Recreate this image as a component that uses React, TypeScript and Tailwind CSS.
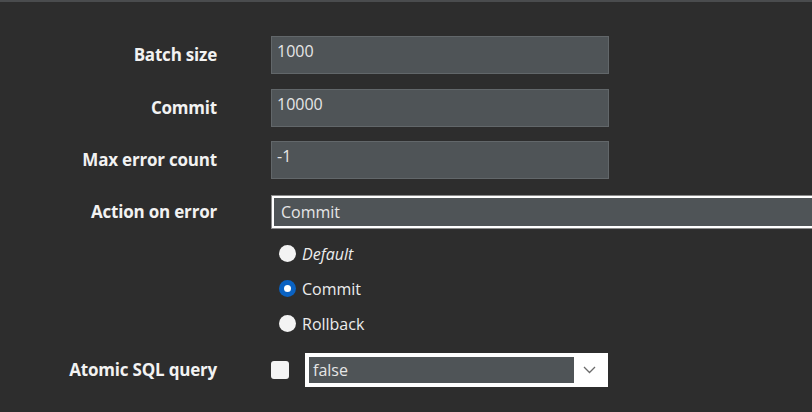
import React, { useState } from 'react';

const font = { fontFamily: '"Open Sans", "Noto Sans", sans-serif' };

const Label: React.FC<{ text: string }> = ({ text }) => (
  <div className="w-[217px] shrink-0 text-right text-[17px] font-bold tracking-[-0.2px] text-[#f2f2f2]">{text}</div>
);

const App: React.FC = () => {
  const [action, setAction] = useState('Commit');
  const [atomic, setAtomic] = useState(false);

  const radios = [
    { label: 'Default', italic: true },
    { label: 'Commit', italic: false },
    { label: 'Rollback', italic: false },
  ];

  return (
    <div className="w-[812px] h-[412px] overflow-hidden bg-[#2d2d2d] border-t-2 border-[#4a4c4e]" style={font}>
      <div className="flex flex-col pt-[34px]">
        {/* Batch size */}
        <div className="flex items-center gap-[54px] h-[38px]">
          <Label text="Batch size" />
          <input
            defaultValue="1000"
            className="w-[338px] h-[38px] bg-[#4f5457] border border-[#62676a] px-[5px] pb-[8px] text-[16px] text-[#e6e6e6] outline-none"
          />
        </div>
        {/* Commit */}
        <div className="flex items-center gap-[54px] h-[38px] mt-[15px]">
          <Label text="Commit" />
          <input
            defaultValue="10000"
            className="w-[338px] h-[38px] bg-[#4f5457] border border-[#62676a] px-[5px] pb-[8px] text-[16px] text-[#e6e6e6] outline-none"
          />
        </div>
        {/* Max error count */}
        <div className="flex items-center gap-[54px] h-[38px] mt-[14px]">
          <Label text="Max error count" />
          <input
            defaultValue="-1"
            className="w-[338px] h-[38px] bg-[#4f5457] border border-[#62676a] px-[5px] pb-[8px] text-[16px] text-[#e6e6e6] outline-none"
          />
        </div>
        {/* Action on error */}
        <div className="flex items-center gap-[54px] h-[34px] mt-[16px]">
          <Label text="Action on error" />
          <div className="flex-1 h-[34px] border border-[#8a8a8a] border-r-0">
            <div className="h-full border-2 border-white border-r-0 bg-[#4f5457] flex items-center px-[7px] text-[16px] text-[#e6e6e6]">
              {action}
            </div>
          </div>
        </div>
        {/* Radios */}
        <div className="flex flex-col ml-[279px] mt-[14px] gap-[14px]">
          {radios.map(r => (
            <label key={r.label} className="flex items-center gap-[6px] h-[21px] text-[16px] text-[#ececec] cursor-pointer" onClick={() => setAction(r.label)}>
              {action === r.label ? (
                <span className="w-[17px] h-[17px] rounded-full bg-[#0a62c2] flex items-center justify-center">
                  <span className="w-[7px] h-[7px] rounded-full bg-white" />
                </span>
              ) : (
                <span className="w-[17px] h-[17px] rounded-full bg-[#f3f3f3]" />
              )}
              <span className={r.italic ? 'italic' : ''}>{r.label}</span>
            </label>
          ))}
        </div>
        {/* Atomic SQL query */}
        <div className="flex items-center gap-[54px] h-[34px] mt-[19px]">
          <Label text="Atomic SQL query" />
          <div className="flex items-center gap-[16px]">
            <button
              onClick={() => setAtomic(a => !a)}
              className="w-[18px] h-[18px] rounded-[3px] bg-[#f3f3f3]"
            />
            <div className="w-[303px] h-[34px] bg-white p-[4px] flex items-center">
              <div className="flex-1 h-full bg-[#4f5457] flex items-center px-[4px] text-[16px] text-[#e6e6e6]">
                {atomic ? 'true' : 'false'}
              </div>
              <div className="w-[30px] flex items-center justify-center">
                <svg width="13" height="8" viewBox="0 0 13 8" fill="none">
                  <path d="M1 1l5.5 5.5L12 1" stroke="#6b6b6b" strokeWidth="1.3" />
                </svg>
              </div>
            </div>
          </div>
        </div>
      </div>
    </div>
  );
};

export default App;
